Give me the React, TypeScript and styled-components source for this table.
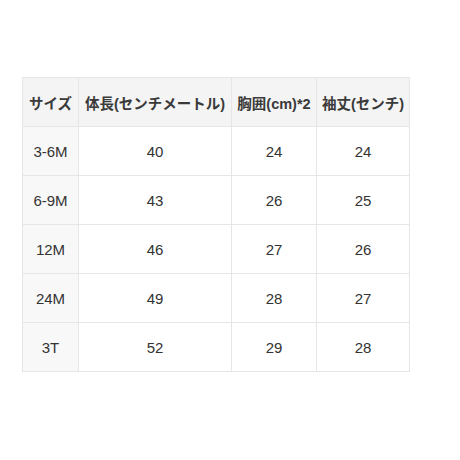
import styled, { createGlobalStyle } from 'styled-components';

const GlobalStyle = createGlobalStyle`
  html, body {
    margin: 0;
    padding: 0;
    background: #ffffff;
  }
  body {
    font-family: "Liberation Sans", "Noto Sans CJK JP", sans-serif;
    color: #333333;
  }
`;

const Page = styled.div`
  width: 460px;
  height: 460px;
  padding: 77px 0 0 22px;
  box-sizing: border-box;
`;

const Table = styled.table`
  border-collapse: collapse;
  table-layout: fixed;
  width: 387px;
`;

const HeadCell = styled.th<{ $w: number }>`
  box-sizing: border-box;
  width: ${({ $w }) => $w}px;
  height: 49px;
  padding: 0;
  background: #f4f4f4;
  border: 1px solid #e6e6e6;
  font-size: 14.5px;
  font-weight: 700;
  color: #3a3a3a;
  text-align: center;
  white-space: nowrap;
`;

const RowHead = styled.td`
  box-sizing: border-box;
  height: 49px;
  padding: 0;
  background: #f8f8f8;
  border: 1px solid #e6e6e6;
  font-size: 15px;
  text-align: center;
  color: #333333;
`;

const Cell = styled.td`
  box-sizing: border-box;
  height: 49px;
  padding: 0;
  background: #ffffff;
  border: 1px solid #e6e6e6;
  font-size: 15px;
  text-align: center;
  color: #333333;
`;

const columns = [
  { label: 'サイズ', w: 56 },
  { label: '体長(センチメートル)', w: 153 },
  { label: '胸囲(cm)*2', w: 85 },
  { label: '袖丈(センチ)', w: 93 },
];

const rows = [
  ['3-6M', '40', '24', '24'],
  ['6-9M', '43', '26', '25'],
  ['12M', '46', '27', '26'],
  ['24M', '49', '28', '27'],
  ['3T', '52', '29', '28'],
];

export default function App() {
  return (
    <>
      <GlobalStyle />
      <Page>
        <Table>
          <thead>
            <tr>
              {columns.map((c) => (
                <HeadCell key={c.label} $w={c.w}>
                  {c.label}
                </HeadCell>
              ))}
            </tr>
          </thead>
          <tbody>
            {rows.map(([size, ...vals]) => (
              <tr key={size}>
                <RowHead>{size}</RowHead>
                {vals.map((v, i) => (
                  <Cell key={i}>{v}</Cell>
                ))}
              </tr>
            ))}
          </tbody>
        </Table>
      </Page>
    </>
  );
}
